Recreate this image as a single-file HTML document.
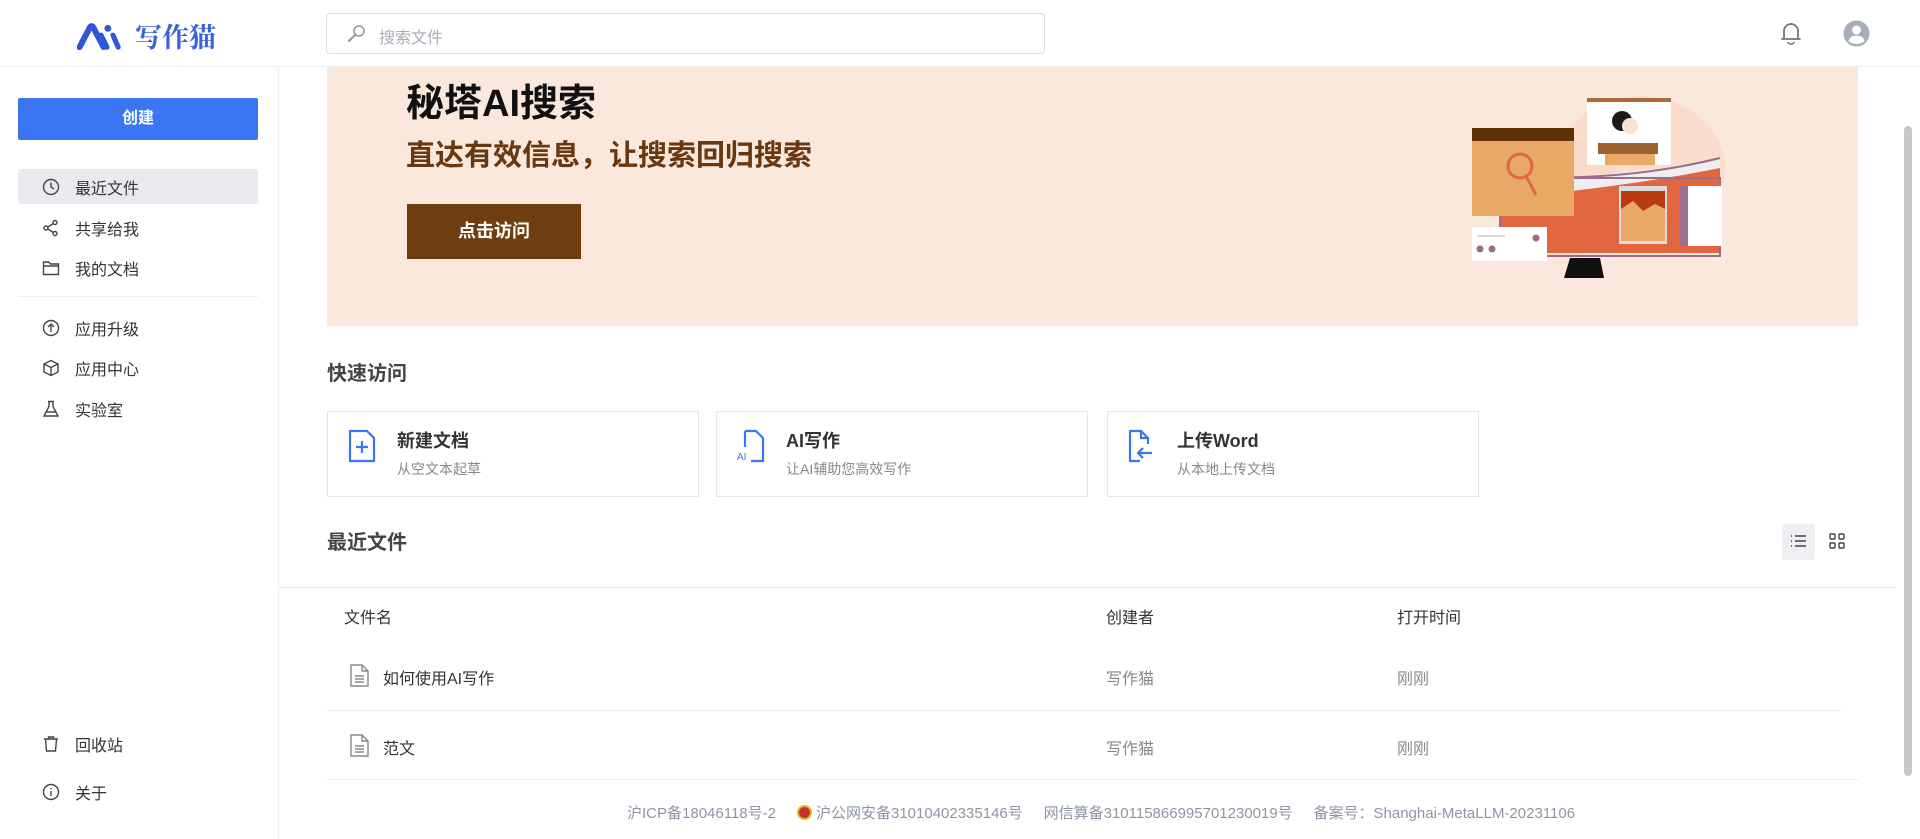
<!DOCTYPE html>
<html><head><meta charset="utf-8"><style>
*{box-sizing:border-box;margin:0;padding:0}
body{width:1920px;height:839px;overflow:hidden;background:#fff;font-family:"Liberation Sans","Noto Sans CJK SC",sans-serif;color:#333;position:relative}
.abs{position:absolute}
.header{left:0;top:0;width:1920px;height:67px;border-bottom:1px solid #eceef2;background:#fff}
.logo{left:77px;top:16px;display:flex;align-items:center}
.logo span{font-family:"Noto Serif CJK SC",serif;font-weight:700;font-size:27px;color:#3a63d8;margin-left:10px}
.search{left:326px;top:13px;width:719px;height:41px;border:1px solid #d9dce2;border-radius:4px}
.search span{position:absolute;left:52px;top:10px;font-size:16px;color:#a8adb6}
.side{left:0;top:67px;width:279px;height:772px;border-right:1px solid #eceef2}
.create{left:18px;top:98px;width:240px;height:42px;background:#3b76f2;color:#fff;font-weight:700;font-size:16px;text-align:center;line-height:42px;border-radius:2px}
.item{left:18px;width:240px;height:35px;font-size:16px;color:#333;display:flex;align-items:center;padding-left:24px;border-radius:3px}
.item svg{margin-right:15px}
.item.active{background:#e9eaee}
.banner{left:327px;top:67px;width:1531px;height:259px;background:#fbe8dd}
.h2{font-size:20px;font-weight:700;color:#444}
.card{top:411px;width:372px;height:86px;border:1px solid #e6e6e6;background:#fff}
.card .t{position:absolute;left:69px;top:15px;font-size:18px;font-weight:700;color:#333}
.card .s{position:absolute;left:69px;top:47px;font-size:14px;color:#888}
.card svg{position:absolute;left:20px;top:17px}
.cell{font-size:16px;color:#333}
.gray{color:#888}
.footer{top:802px;left:627px;font-size:15px;color:#8d95a5;white-space:nowrap}
</style></head><body>
<div class="abs header"></div>
<div class="abs logo">
<svg width="48" height="28" viewBox="0 0 56 30"><path d="M3 28 L15 5 Q17 2 19 5 L31 28" stroke="#2f56d4" stroke-width="7" fill="none" stroke-linecap="round" stroke-linejoin="round"/><path d="M28 14 L35 28" stroke="#2f56d4" stroke-width="6" stroke-linecap="round"/><circle cx="36" cy="6" r="4" fill="#2f56d4"/><path d="M42 14 L48 28" stroke="#2f56d4" stroke-width="6" stroke-linecap="round"/></svg>
<span>写作猫</span></div>
<div class="abs search"><svg class="abs" style="left:19px;top:10px" width="20" height="20" viewBox="0 0 20 20"><circle cx="13" cy="7" r="5" fill="none" stroke="#999" stroke-width="1.6"/><path d="M9.5 10.5 L3 17" stroke="#999" stroke-width="2.2" stroke-linecap="round"/></svg><span>搜索文件</span></div>
<svg class="abs" style="left:1780px;top:20px" width="22" height="26" viewBox="0 0 22 26"><path d="M4 19 V11 a7 7 0 0 1 14 0 V19 H20 H2 Z" fill="none" stroke="#777" stroke-width="1.8" stroke-linejoin="round"/><path d="M8 22 a3 2 0 0 0 6 0" fill="none" stroke="#777" stroke-width="1.6"/><path d="M11 3 V5" stroke="#777" stroke-width="1.8"/></svg>
<svg class="abs" style="left:1843px;top:20px" width="27" height="27" viewBox="0 0 27 27"><circle cx="13.5" cy="13.5" r="13" fill="#a7adba"/><circle cx="13.5" cy="10" r="4.5" fill="#fff"/><path d="M5.5 21 Q7 15.5 13.5 15.5 Q20 15.5 21.5 21 Q18 24 13.5 24 Q9 24 5.5 21Z" fill="#fff"/></svg>

<div class="abs side"></div>
<div class="abs create">创建</div>
<div class="abs item active" style="top:169px"><svg width="18" height="18" viewBox="0 0 18 18" fill="none" stroke="#444" stroke-width="1.4"><circle cx="9" cy="9" r="7.5"/><path d="M9 4.5V9l3 2"/></svg>最近文件</div>
<div class="abs item" style="top:210px"><svg width="18" height="18" viewBox="0 0 18 18" fill="none" stroke="#444" stroke-width="1.4"><circle cx="13" cy="3.5" r="2"/><circle cx="4" cy="9" r="2"/><circle cx="13" cy="14.5" r="2"/><path d="M5.8 8 L11.2 4.6 M5.8 10 L11.2 13.4"/></svg>共享给我</div>
<div class="abs item" style="top:250px"><svg width="18" height="18" viewBox="0 0 18 18" fill="none" stroke="#444" stroke-width="1.4"><path d="M1.5 3h5l2 2h8v10.5h-15z M1.5 7h15"/></svg>我的文档</div>
<div class="abs" style="left:18px;top:296px;width:240px;height:1px;background:#eceef2"></div>
<div class="abs item" style="top:310px"><svg width="18" height="18" viewBox="0 0 18 18" fill="none" stroke="#444" stroke-width="1.4"><circle cx="9" cy="9" r="7.5"/><path d="M9 13V5 M6 8l3-3 3 3"/></svg>应用升级</div>
<div class="abs item" style="top:350px"><svg width="18" height="18" viewBox="0 0 18 18" fill="none" stroke="#444" stroke-width="1.4"><path d="M9 1.5l7 3.5v8l-7 3.5-7-3.5v-8z M2 5l7 3.5 7-3.5 M9 8.5v8"/></svg>应用中心</div>
<div class="abs item" style="top:391px"><svg width="18" height="18" viewBox="0 0 18 18" fill="none" stroke="#444" stroke-width="1.4"><path d="M6 1.5h6 M7 1.5v5l-5 9.5h14l-5-9.5v-5 M4 12h10"/></svg>实验室</div>
<div class="abs item" style="top:726px"><svg width="18" height="18" viewBox="0 0 18 18" fill="none" stroke="#444" stroke-width="1.4"><path d="M2 4h14 M6.5 4V2h5v2 M3.5 4l1 12h9l1-12"/></svg>回收站</div>
<div class="abs item" style="top:774px"><svg width="18" height="18" viewBox="0 0 18 18" fill="none" stroke="#444" stroke-width="1.4"><circle cx="9" cy="9" r="7.5"/><path d="M9 8v5 M9 5v1.2"/></svg>关于</div>

<div class="abs banner"></div>
<div class="abs" style="left:406px;top:72px;font-size:38px;font-weight:700;color:#111">秘塔AI搜索</div>
<div class="abs" style="left:406px;top:132px;font-size:29px;font-weight:700;color:#6a3810">直达有效信息，让搜索回归搜索</div>
<div class="abs" style="left:407px;top:204px;width:174px;height:55px;background:#6e3d10;color:#fff;font-weight:700;font-size:18px;text-align:center;line-height:55px">点击访问</div>
<svg class="abs" style="left:1470px;top:88px" width="280" height="195" viewBox="0 0 280 195">
<ellipse cx="170" cy="80" rx="85" ry="72" fill="#f9d8c4" opacity=".7"/>
<ellipse cx="90" cy="110" rx="65" ry="60" fill="#f9d8c4" opacity=".6"/>
<rect x="117" y="10" width="84" height="67" fill="#fff"/><rect x="117" y="10" width="84" height="4" fill="#a86a3e"/>
<circle cx="152" cy="33" r="10" fill="#1a1a1a"/><circle cx="160" cy="38" r="8" fill="#fbe3d2"/><rect x="135" y="55" width="50" height="22" fill="#e8a866"/>
<rect x="128" y="55" width="60" height="11" fill="#9c6230"/>
<path d="M30 110 Q140 85 250 72 V165 H30Z" fill="#e2663f"/>
<path d="M30 90 Q150 90 250 70 V80 Q150 100 30 110Z" fill="#eee"/>
<path d="M30 88 Q150 95 250 70" stroke="#9c6b8c" stroke-width="2" fill="none"/>
<rect x="30" y="90" width="220" height="78" fill="none" stroke="#9c6b8c" stroke-width="2"/>
<rect x="149" y="98" width="48" height="58" fill="#ddd"/><rect x="151" y="103" width="44" height="50" fill="#e8a866"/><path d="M151 103h44v18l-10-5-12 7-10-10-12 8z" fill="#b83a10"/>
<rect x="210" y="98" width="42" height="60" fill="#fff"/><rect x="210" y="98" width="8" height="60" fill="#a07090"/>
<path d="M100 170 h30 l4 20 h-40z" fill="#111"/>
<rect x="2" y="40" width="102" height="88" fill="#e8a866"/><rect x="2" y="40" width="102" height="13" fill="#5c3008"/>
<circle cx="50" cy="78" r="12" fill="none" stroke="#e2663f" stroke-width="3"/><path d="M56 88 L66 107" stroke="#e2663f" stroke-width="3"/>
<rect x="2" y="139" width="75" height="34" fill="#fff"/><circle cx="10" cy="161" r="3.5" fill="#9c6b8c"/><circle cx="22" cy="161" r="3.5" fill="#9c6b8c"/><circle cx="66" cy="150" r="3.5" fill="#9c6b8c"/><rect x="7" y="147" width="28" height="2" fill="#e6d3dd"/>
</svg>

<div class="abs" style="left:1904px;top:126px;width:8px;height:650px;background:#c8c8c8;border-radius:4px"></div>

<div class="abs h2" style="left:327px;top:357px">快速访问</div>
<div class="abs card" style="left:327px"><svg width="28" height="34" viewBox="0 0 28 34" fill="none" stroke="#3b76f2" stroke-width="2.2" stroke-linejoin="round"><path d="M2 2h17l7 7v23H2z"/><path d="M14 12v12 M8 18h12"/></svg><div class="t">新建文档</div><div class="s">从空文本起草</div></div>
<div class="abs card" style="left:716px"><svg width="28" height="34" viewBox="0 0 28 34" fill="none" stroke="#3b76f2" stroke-width="2.2" stroke-linejoin="round"><path d="M8 2h11l7 7v23H14 M8 2v16"/><text x="0" y="31" font-size="10" fill="#3b76f2" stroke="none" font-family="Liberation Sans">AI</text></svg><div class="t">AI写作</div><div class="s">让AI辅助您高效写作</div></div>
<div class="abs card" style="left:1107px"><svg width="28" height="34" viewBox="0 0 28 34" fill="none" stroke="#3b76f2" stroke-width="2.2" stroke-linejoin="round"><path d="M12 32H2V2h11l7 7v6 M13 2v7h7 M24 24H10 M15 19l-5 5 5 5"/></svg><div class="t">上传Word</div><div class="s">从本地上传文档</div></div>

<div class="abs h2" style="left:327px;top:526px">最近文件</div>
<div class="abs" style="left:1782px;top:524px;width:33px;height:36px;background:#eeeff2;border-radius:3px"></div>
<svg class="abs" style="left:1790px;top:533px" width="17" height="16" viewBox="0 0 17 16" fill="none" stroke="#444" stroke-width="1.4"><path d="M1 3h1 M1 8h1 M1 13h1 M5 3h11 M5 8h11 M5 13h11"/></svg>
<svg class="abs" style="left:1829px;top:533px" width="16" height="16" viewBox="0 0 16 16" fill="none" stroke="#444" stroke-width="1.4"><rect x="1" y="1" width="5" height="5" rx="1"/><rect x="10" y="1" width="5" height="5" rx="1"/><rect x="1" y="10" width="5" height="5" rx="1"/><rect x="10" y="10" width="5" height="5" rx="1"/></svg>
<div class="abs" style="left:279px;top:587px;width:1617px;height:1px;background:#e6e8ec"></div>

<div class="abs cell" style="left:344px;top:604px">文件名</div>
<div class="abs cell" style="left:1106px;top:604px">创建者</div>
<div class="abs cell" style="left:1397px;top:604px">打开时间</div>

<svg class="abs" style="left:350px;top:664px" width="19" height="23" viewBox="0 0 19 23" fill="none" stroke="#888" stroke-width="1.4"><path d="M1 1h11l6 6v15H1z M12 1v6h6 M5 12h9 M5 15h9 M5 18h9"/></svg>
<div class="abs cell" style="left:383px;top:665px">如何使用AI写作</div>
<div class="abs cell gray" style="left:1106px;top:665px">写作猫</div>
<div class="abs cell gray" style="left:1397px;top:665px">刚刚</div>
<div class="abs" style="left:327px;top:710px;width:1514px;height:1px;background:#ebecf0"></div>
<svg class="abs" style="left:350px;top:734px" width="19" height="23" viewBox="0 0 19 23" fill="none" stroke="#888" stroke-width="1.4"><path d="M1 1h11l6 6v15H1z M12 1v6h6 M5 12h9 M5 15h9 M5 18h9"/></svg>
<div class="abs cell" style="left:383px;top:735px">范文</div>
<div class="abs cell gray" style="left:1106px;top:735px">写作猫</div>
<div class="abs cell gray" style="left:1397px;top:735px">刚刚</div>
<div class="abs" style="left:327px;top:779px;width:1531px;height:1px;background:#ebecf0"></div>

<div class="abs footer">沪ICP备18046118号-2 &nbsp;&nbsp;&nbsp; <span style="display:inline-block;width:15px;height:15px;border-radius:50%;background:#c9302c;vertical-align:-2px;border:2px solid #e8b030"></span> 沪公网安备31010402335146号 &nbsp;&nbsp;&nbsp; 网信算备310115866995701230019号 &nbsp;&nbsp;&nbsp; 备案号：Shanghai-MetaLLM-20231106</div>
</body></html>
